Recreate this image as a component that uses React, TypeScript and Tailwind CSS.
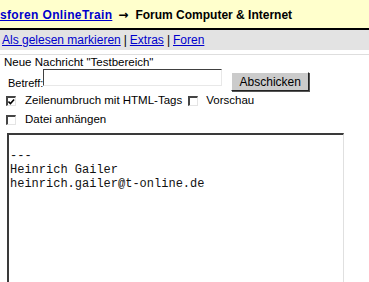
export default function App() {
  return (
    <div className="w-[369px] h-[282px] overflow-hidden bg-white text-black font-['Liberation_Sans',Arial,sans-serif]">
      {/* breadcrumb */}
      <div className="h-[28px] bg-[#ffffcc] flex items-center whitespace-nowrap text-[12px] font-bold pt-[1px]">
        <a href="#" className="text-[#0000cc] underline tracking-[0.35px]">sforen OnlineTrain</a>
        <span className="ml-[6px] mr-[7px] font-['DejaVu_Sans'] text-[12px] leading-none">→</span>
        <span>Forum Computer &amp; Internet</span>
      </div>
      <div className="h-[2px] bg-black" />

      {/* toolbar */}
      <div className="h-[20px] bg-[#e3e3e3] flex items-center px-[2px] text-[12px] whitespace-nowrap">
        <a href="#" className="text-[#0000cc] underline">Als gelesen markieren</a>
        <span className="mx-[3px]">|</span>
        <a href="#" className="text-[#0000cc] underline">Extras</a>
        <span className="mx-[3px]">|</span>
        <a href="#" className="text-[#0000cc] underline">Foren</a>
      </div>
      <div className="h-[4px]" />
      <div className="h-px bg-[#dedede]" />

      {/* form */}
      <div className="text-[11.5px] pl-[4px]">
        <div className="leading-[12px] pt-[1px]">Neue Nachricht "Testbereich"</div>
        <div className="flex items-start h-[22px]">
          <span className="pl-[4px] pt-[7px] text-[11px]">Betreff:</span>
          <input
            className="w-[179px] h-[17px] mt-[1px] border-t border-l border-[#404040] border-r border-b border-r-[#e8e8e8] border-b-[#e8e8e8] outline-none"
            defaultValue=""
          />
          <button className="ml-[9px] mt-[4px] h-[19px] w-[78px] bg-[#cbcbcb] text-[12px] border border-t-white border-l-white border-r-[#222] border-b-[#222] shadow-[1px_1px_0_#555]">
            Abschicken
          </button>
        </div>
        <div className="flex items-center h-[20px] mt-[1px]">
          <Box checked className="ml-[2px]" />
          <span className="ml-[9px]">Zeilenumbruch mit HTML-Tags</span>
          <Box className="ml-[6px]" />
          <span className="ml-[8px]">Vorschau</span>
        </div>
        <div className="flex items-center h-[18px]">
          <Box className="ml-[2px]" />
          <span className="ml-[9px]">Datei anhängen</span>
        </div>
      </div>

      <textarea
        className="block ml-[7px] mt-[4px] w-[337px] h-[200px] resize-none outline-none border-t-2 border-l-2 border-[#3a3a3a] border-r border-b border-r-[#e0e0e0] border-b-[#e0e0e0] px-[1px] pt-0 text-[12px] leading-[14px] font-['Liberation_Mono','Courier_New',monospace] text-[#111] overflow-hidden"
        defaultValue={"\n---\nHeinrich Gailer\nheinrich.gailer@t-online.de"}
      />
    </div>
  );
}

function Box({ checked, className = "" }: { checked?: boolean; className?: string }) {
  return (
    <span
      className={`inline-flex w-[10px] h-[10px] bg-white border-t-2 border-l-2 border-[#444] border-r border-b border-r-[#e4e4e4] border-b-[#e4e4e4] items-center justify-center ${className}`}
    >
      {checked && (
        <svg width="8" height="8" viewBox="0 0 8 8">
          <path d="M0.5 3.5 L2.8 5.8 L7 1.2" stroke="#000" strokeWidth="1.8" fill="none" />
        </svg>
      )}
    </span>
  );
}
